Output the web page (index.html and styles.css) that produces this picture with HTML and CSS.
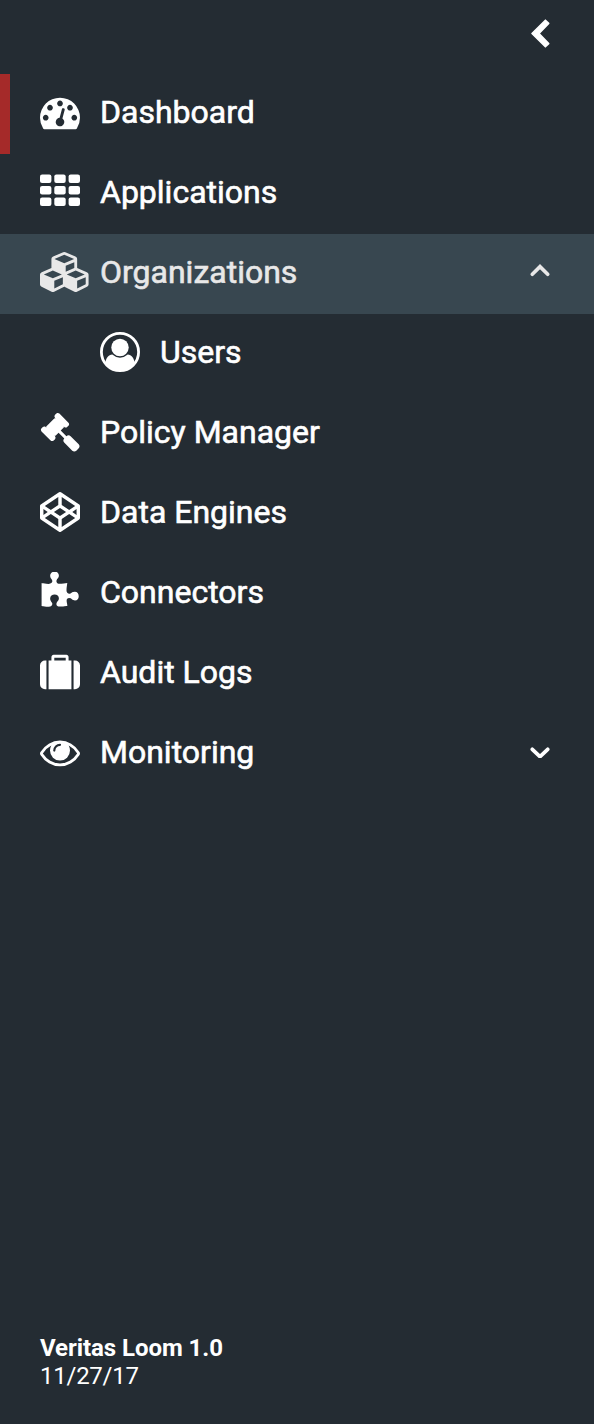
FILE: index.html
```
<!DOCTYPE html>
<html lang="en">
<head>
<meta charset="utf-8">
<title>Veritas Loom</title>
<link rel="stylesheet" href="styles.css">
</head>
<body>
<aside class="sidebar">
  <header class="top">
    <svg class="collapse" width="22" height="32" viewBox="0 0 22 32"><path d="M16.400 3.200 3 16.500l13.400 13.300 3.300-3.200L10 16.500l9.700-10.100z"/></svg>
  </header>
  <nav class="nav">
    <a class="item current">
      <svg class="icon" viewBox="0 0 1792 1792"><path d="M384 1152q0-53-37.500-90.500t-90.500-37.500-90.500 37.500-37.500 90.500 37.500 90.500 90.500 37.500 90.500-37.500 37.500-90.500zm192-448q0-53-37.500-90.500t-90.500-37.500-90.500 37.500-37.500 90.500 37.500 90.500 90.500 37.500 90.500-37.500 37.500-90.500zm428 481l101-382q6-26-7.500-48.500t-38.500-29.500-48 6.500-30 39.500l-101 382q-60 5-107 43.500t-63 98.500q-20 77 20 146t117 89 146-20 89-117q16-60-6-117t-72-91zm660-33q0-53-37.500-90.500t-90.500-37.500-90.500 37.500-37.500 90.500 37.500 90.500 90.500 37.500 90.500-37.500 37.500-90.500zm-640-640q0-53-37.500-90.500t-90.500-37.500-90.500 37.500-37.500 90.500 37.500 90.500 90.500 37.500 90.500-37.500 37.500-90.500zm448 192q0-53-37.500-90.500t-90.500-37.500-90.500 37.500-37.500 90.500 37.500 90.500 90.500 37.500 90.500-37.500 37.500-90.500zm320 448q0 261-141 483-19 29-54 29h-1402q-35 0-54-29-141-221-141-483 0-182 71-348t191-286 286-191 348-71 348 71 286 191 191 286 71 348z"/></svg>
      <span class="label">Dashboard</span>
    </a>
    <a class="item">
      <svg class="icon" viewBox="0 0 40 40"><g><rect x="0" y="2.5" width="11.4" height="8.6" rx="2.1"/><rect x="14.3" y="2.5" width="11.4" height="8.6" rx="2.1"/><rect x="28.6" y="2.5" width="11.4" height="8.6" rx="2.1"/><rect x="0" y="14" width="11.4" height="8.6" rx="2.1"/><rect x="14.3" y="14" width="11.4" height="8.6" rx="2.1"/><rect x="28.6" y="14" width="11.4" height="8.6" rx="2.1"/><rect x="0" y="25.5" width="11.4" height="8.6" rx="2.1"/><rect x="14.3" y="25.5" width="11.4" height="8.6" rx="2.1"/><rect x="28.6" y="25.5" width="11.4" height="8.6" rx="2.1"/></g></svg>
      <span class="label">Applications</span>
    </a>
    <a class="item open">
      <svg class="icon wide" viewBox="0 0 2240 1792"><path d="M640 1632l384-192v-314l-384 164v342zm-64-454l404-173-404-173-404 173zm1088 454l384-192v-314l-384 164v342zm-64-454l404-173-404-173-404 173zm-448-293l384-165v-266l-384 164v267zm-64-379l441-189-441-189-441 189zm1088 518v416q0 36-19 67t-52 47l-448 224q-25 14-57 14t-57-14l-448-224q-4-2-7-4-2 2-7 4l-448 224q-25 14-57 14t-57-14l-448-224q-33-16-52-47t-19-67v-416q0-38 21.500-70t56.500-48l434-186v-400q0-38 21.500-70t56.500-48l448-192q23-10 50-10t50 10l448 192q35 16 56.500 48t21.500 70v400l434 186q36 16 57 48t21 70z"/></svg>
      <span class="label">Organizations</span>
      <svg class="chevron" viewBox="0 0 22 16"><path d="M3.300 12.300 11 4.700l7.700 7.600"/></svg>
    </a>
    <a class="item child">
      <svg class="icon" viewBox="0 0 40 40"><circle class="ring" cx="20" cy="20" r="18.600"/><circle cx="20" cy="15.500" r="8.700"/><path d="M5 31.500C6 26 8.500 22.600 12.300 22.400Q20 29 27.700 22.400C31.500 22.600 34 26 35 31.500A18.600 18.600 0 0 1 5 31.500z"/></svg>
      <span class="label">Users</span>
    </a>
    <a class="item">
      <svg class="icon" viewBox="0 0 1792 1792"><path d="M1771 1536q0 53-37 90l-107 108q-39 37-91 37-53 0-90-37l-363-364q-38-36-38-90 0-53 43-96l-256-256-126 126q-14 14-34 14t-34-14q2 2 12.500 12t12.500 13 10 11.500 10 13.500 6 13.500 5.500 16.500 1.500 18q0 38-28 68-3 3-16.500 18t-19 20.500-18.500 16.500-22 15.500-22 9-26 4.500q-40 0-68-28l-408-408q-28-28-28-68 0-13 4.500-26t9-22 15.500-22 16.500-18.500 20.500-19 18-16.500q30-28 68-28 10 0 18 1.500t16.500 5.500 13.500 6 13.500 10 11.500 10 13 12.500 12 12.500q-14-14-14-34t14-34l348-348q14-14 34-14t34 14q-2-2-12.500-12t-12.500-13-10-11.500-10-13.500-6-13.500-5.500-16.500-1.500-18q0-38 28-68 3-3 16.500-18t19-20.500 18.500-16.500 22-15.500 22-9 26-4.500q40 0 68 28l408 408q28 28 28 68 0 13-4.500 26t-9 22-15.500 22-16.500 18.500-20.500 19-18 16.500q-30 28-68 28-10 0-18-1.500t-16.500-5.500-13.500-6-13.500-10-11.500-10-13-12.500-12-12.500q14 14 14 34t-14 34l-126 126 256 256q43-43 96-43 52 0 91 37l363 363q37 39 37 91z"/></svg>
      <span class="label">Policy Manager</span>
    </a>
    <a class="item">
      <svg class="icon" viewBox="0 0 1792 1792"><path d="M216 1169l603 402v-359l-334-223zm-62-144l193-129-193-129v258zm819 546l603-402-269-180-334 223v359zm-77-493l272-182-272-182-272 182zm-411-275l334-223v-359l-603 402zm960 93l193 129v-258zm-138-93l269-180-603-402v359zm485-180v546q0 41-34 64l-819 546q-21 13-43 13t-43-13l-819-546q-34-23-34-64v-546q0-41 34-64l819-546q21-13 43-13t43 13l819 546q34 23 34 64z" fill-rule="evenodd"/></svg>
      <span class="label">Data Engines</span>
    </a>
    <a class="item">
      <svg class="icon" viewBox="20 0 1792 1792"><path d="M1755 1083q0 81-44.500 135t-123.500 54q-41 0-77.500-17.500t-59-38-56.500-38-71-17.500q-110 0-110 124 0 39 16 115t15 115v5q-22 0-33 1-34 3-97.500 11.500t-115.500 13.500-98 5q-61 0-103-26.500t-42-83.500q0-37 17.500-71t38-56.500 38-59 17.500-77.500q0-79-54-123.500t-135-44.500q-84 0-143 45.500t-59 127.500q0 43 15 83t33.500 64.500 33.500 53 15 50.500q0 45-46 89-37 35-117 35-95 0-245-24-9-2-27.500-4t-27.500-4l-13-2q-1 0-3-1-2 0-2-1v-1024q2 1 17.500 3.500t34 5 21.500 3.500q150 24 245 24 80 0 117-35 46-44 46-89 0-22-15-50.500t-33.500-53-33.500-64.500-15-83q0-82 59-127.500t144-45.500q80 0 134 44.500t54 123.500q0 41-17.500 77.500t-38 59-38 56.500-17.500 71q0 57 42 83.500t103 26.500q64 0 180-15t163-17v2q-1 2-3.500 17.500t-5 34-3.500 21.500q-24 150-24 245 0 80 35 117 44 46 89 46 22 0 50.500-15t53-33.500 64.500-33.500 83-15q82 0 127.500 59t45.500 143z"/></svg>
      <span class="label">Connectors</span>
    </a>
    <a class="item">
      <svg class="icon" viewBox="0 0 1792 1792"><path d="M640 384h512v-128h-512v128zm-352 0v1280h-64q-92 0-158-66t-66-158v-832q0-92 66-158t158-66h64zm1120 0v1280h-1024v-1280h128v-160q0-40 28-68t68-28h576q40 0 68 28t28 68v160h128zm384 224v832q0 92-66 158t-158 66h-64v-1280h64q92 0 158 66t66 158z"/></svg>
      <span class="label">Audit Logs</span>
    </a>
    <a class="item">
      <svg class="icon" viewBox="0 0 1792 1792"><path d="M1664 960q-152-236-381-353 61 104 61 225 0 185-131.500 316.500t-316.500 131.500-316.500-131.500-131.500-316.500q0-121 61-225-229 117-381 353 133 205 333.500 326.500t434.500 121.500 434.500-121.500 333.500-326.500zm-720-384q0-20-14-34t-34-14q-125 0-214.500 89.500t-89.500 214.500q0 20 14 34t34 14 34-14 14-34q0-86 61-147t147-61q20 0 34-14t14-34zm848 384q0 34-20 69-140 230-376.500 368.500t-499.500 138.500-499.500-139-376.500-368q-20-35-20-69t20-69q140-229 376.500-368t499.500-139 499.500 139 376.500 368q20 35 20 69z"/></svg>
      <span class="label">Monitoring</span>
      <svg class="chevron" viewBox="0 0 22 16"><path d="M3.300 7.300 11 14.700l7.700-7.400"/></svg>
    </a>
  </nav>
  <footer class="version">
    <strong>Veritas Loom 1.0</strong>
    <span class="date">11/27/17</span>
  </footer>
</aside>
</body>
</html>
```
FILE: styles.css
```
* { box-sizing: border-box; }
body { margin: 0; background: #242c33; }
.sidebar {
  display: flex;
  flex-direction: column;
  height: 1424px;
  background: #242c33;
  color: #fff;
  font-family: Roboto, "Liberation Sans", sans-serif;
}
.top {
  display: flex;
  justify-content: flex-end;
  height: 74px;
  padding: 17px 43px 0 0;
}
svg { display: block; flex: none; fill: currentColor; }
.collapse { stroke: currentColor; stroke-width: 1.6; stroke-linejoin: round; }
.nav { display: flex; flex-direction: column; }
.item {
  display: flex;
  align-items: flex-start;
  height: 80px;
  padding: 18px 43px 0 30px;
  border-left: 10px solid transparent;
  font-size: 32px;
  line-height: 40px;
}
.current { border-left-color: #a52a29; }
.open { background: #384750; border-left-color: #384750; color: #e8e8e8; }
.child { padding-left: 90px; }
.icon { width: 40px; height: 40px; }
.wide { width: 50px; margin-right: -10px; }
.ring { fill: none; stroke: currentColor; stroke-width: 2.8; }
.label {
  flex: 1;
  margin-left: 20px;
  white-space: nowrap;
  -webkit-text-stroke: 0.6px currentColor;
}
.chevron {
  width: 22px;
  height: 16px;
  margin-top: 10px;
  fill: none;
  stroke: currentColor;
  stroke-width: 3.7;
  stroke-linecap: round;
}
.version {
  display: flex;
  flex-direction: column;
  margin-top: auto;
  padding: 0 40px 34px;
  font-size: 24px;
  line-height: 28px;
  letter-spacing: -0.06px;
}
.date { letter-spacing: -0.25px; }
```
